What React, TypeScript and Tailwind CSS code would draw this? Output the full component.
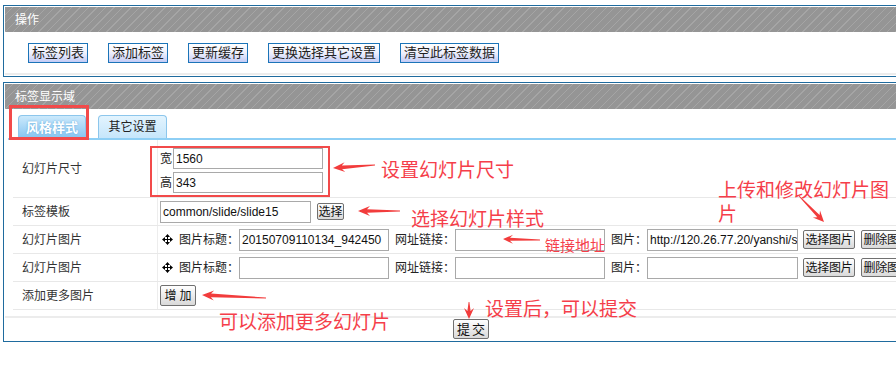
import React from "react";

const stripe =
  "bg-[repeating-linear-gradient(135deg,#959595_0px,#959595_5px,#a5a5a5_5px,#a5a5a5_6px)]";

function Header({ text }: { text: string }) {
  return (
    <div
      className={`h-[25px] ${stripe} pl-[10px] flex items-center text-white text-[12px] leading-none`}
    >
      {text}
    </div>
  );
}

function BlueBtn({ children }: { children: React.ReactNode }) {
  return (
    <div className="h-[20px] px-[3px] border border-[#1b74b8] bg-linear-to-b from-white via-[#eef0fc] to-[#c3cbf5] text-[13px] leading-[18px] text-[#222] whitespace-nowrap">
      {children}
    </div>
  );
}

function GrayBtn({
  children,
  className = "",
}: {
  children: React.ReactNode;
  className?: string;
}) {
  return (
    <div
      className={`border border-[#707070] rounded-[2px] bg-linear-to-b from-white to-[#d9d9d9] text-[12px] text-[#111] whitespace-nowrap flex items-center justify-center overflow-hidden ${className}`}
    >
      {children}
    </div>
  );
}

function Input({ value = "", className = "" }: { value?: string; className?: string }) {
  return (
    <div
      className={`border border-[#a9a9a9] bg-white text-[12px] text-[#111] pl-[2px] flex items-center overflow-hidden whitespace-nowrap ${className}`}
    >
      {value}
    </div>
  );
}

function MoveIcon() {
  return (
    <svg width="11" height="11" viewBox="0 0 11 11" className="shrink-0">
      <path d="M5 2h1v7H5z M2 5h7v1H2z" fill="#000" />
      <path
        d="M5.5 0 L8 3 H3z M5.5 11 L3 8 H8z M0 5.5 L3 3 V8z M11 5.5 L8 3 V8z"
        fill="#000"
      />
    </svg>
  );
}

function Arrow({
  x1,
  y1,
  x2,
  y2,
  hl = 12,
  hh = 5,
  w = 1.8,
}: {
  x1: number;
  y1: number;
  x2: number;
  y2: number;
  hl?: number;
  hh?: number;
  w?: number;
}) {
  const dx = x2 - x1;
  const dy = y2 - y1;
  const L = Math.hypot(dx, dy);
  const ux = dx / L;
  const uy = dy / L;
  const nx = -uy;
  const ny = ux;
  const bx = x2 - ux * hl;
  const by = y2 - uy * hl;
  const nbx = x2 - ux * (hl - 3);
  const nby = y2 - uy * (hl - 3);
  const t = 0.4;
  const pts = [
    [x1 + nx * t, y1 + ny * t],
    [nbx + nx * w, nby + ny * w],
    [bx + nx * hh, by + ny * hh],
    [x2, y2],
    [bx - nx * hh, by - ny * hh],
    [nbx - nx * w, nby - ny * w],
    [x1 - nx * t, y1 - ny * t],
  ]
    .map((p) => `${p[0].toFixed(1)},${p[1].toFixed(1)}`)
    .join(" ");
  return <polygon points={pts} fill="#f23c3c" />;
}

function Row({
  label,
  h,
  children,
  top = false,
}: {
  label: string;
  h: string;
  children: React.ReactNode;
  top?: boolean;
}) {
  return (
    <div className={`flex ${h} border-b border-[#e8e8e8]`}>
      <div className="w-[145px] shrink-0 border-r border-[#ededed] pl-[9px] flex items-center text-[12px] text-[#333]">
        {label}
      </div>
      <div className={`flex-1 flex ${top ? "items-start" : "items-center"} pl-[2px]`}>
        {children}
      </div>
    </div>
  );
}

function ImageRow({ title }: { title: string }) {
  return (
    <Row label="幻灯片图片" h="h-[28px]">
      <div className="flex items-center text-[12px] text-[#222] pl-[2px]">
        <MoveIcon />
        <span className="ml-[6px] w-[60px] whitespace-nowrap">图片标题：</span>
        <Input value={title} className="w-[150px] h-[22px]" />
        <span className="ml-[6px] w-[60px] whitespace-nowrap">网址链接：</span>
        <Input className="w-[150px] h-[22px]" />
        <span className="ml-[6px] w-[36px] whitespace-nowrap">图片：</span>
        <Input
          value={title ? "http://120.26.77.20/yanshi/static/" : ""}
          className="w-[151px] h-[22px]"
        />
        <GrayBtn className="ml-[5px] w-[52px] h-[19px] leading-none tracking-[-0.3px]">
          选择图片
        </GrayBtn>
        <GrayBtn className="ml-[6px] w-[52px] h-[19px] leading-none tracking-[-0.3px]">
          删除图片
        </GrayBtn>
      </div>
    </Row>
  );
}

export default function App() {
  return (
    <div className="relative w-[896px] h-[392px] overflow-hidden bg-white font-['Liberation_Sans','Noto_Sans_CJK_SC',sans-serif] text-[#222]">
      <div className="pt-[5px] pl-[3px]">
        {/* Panel 1 */}
        <div className="w-[1000px] border border-[#1f6b9e] p-px">
          <Header text="操作" />
          <div className="h-[43px] border-b-2 border-[#ececec] flex items-start gap-[20px] pl-[23px] pt-[11px]">
            <BlueBtn>标签列表</BlueBtn>
            <BlueBtn>添加标签</BlueBtn>
            <BlueBtn>更新缓存</BlueBtn>
            <BlueBtn>更换选择其它设置</BlueBtn>
            <BlueBtn>清空此标签数据</BlueBtn>
          </div>
        </div>

        {/* Panel 2 */}
        <div className="mt-[5px] w-[1000px] border border-[#1f6b9e] p-px">
          <Header text="标签显示域" />
          {/* Tabs */}
          <div className="h-[31px] ml-[3px] pt-[6px] border-b-2 border-[#8ecff5] flex items-end gap-[12px] pl-[10px]">
            <div className="w-[68px] h-[23px] rounded-t-[4px] border border-b-0 border-[#8cc6ec] bg-linear-to-b from-[#cbe9fc] to-[#86c5f0] flex items-center justify-center text-white font-bold text-[13px] leading-none [text-shadow:0_0_2px_#5fa7d8]">
              风格样式
            </div>
            <div className="w-[69px] h-[23px] rounded-t-[4px] border border-b-0 border-[#8cc6ec] bg-linear-to-b from-[#e3f4fe] to-[#c6e6fb] flex items-center justify-center text-[#222] text-[12px] leading-none">
              其它设置
            </div>
          </div>

          {/* Table */}
          <div className="ml-[8px]">
            <Row label="幻灯片尺寸" h="h-[58px]" top>
              <div className="flex flex-col gap-[3px] pt-[8px] text-[12px]">
                <div className="flex items-center">
                  <span className="w-[13px]">宽</span>
                  <Input value="1560" className="w-[150px] h-[21px]" />
                </div>
                <div className="flex items-center">
                  <span className="w-[13px]">高</span>
                  <Input value="343" className="w-[150px] h-[21px]" />
                </div>
              </div>
            </Row>
            <Row label="标签模板" h="h-[28px]">
              <Input value="common/slide/slide15" className="w-[151px] h-[22px]" />
              <GrayBtn className="ml-[6px] w-[27px] h-[17px] leading-none">选择</GrayBtn>
            </Row>
            <ImageRow title="20150709110134_942450" />
            <ImageRow title="" />
            <Row label="添加更多图片" h="h-[28px]">
              <GrayBtn className="w-[36px] h-[21px] leading-none tracking-[3px] pl-[3px]">
                增加
              </GrayBtn>
            </Row>
          </div>
          <div className="mt-[6px] border-t-2 border-[#ececec] pt-[1px] pb-[1px]">
            <GrayBtn className="ml-[448px] w-[36px] h-[20px] leading-none text-[13px] tracking-[2px] pl-[2px]">
              提交
            </GrayBtn>
          </div>
        </div>
      </div>

      {/* Annotations overlay */}
      <div className="absolute left-[9px] top-[105px] w-[80px] h-[35px] border-[3px] border-[#f24a4a] pointer-events-none" />
      <div className="absolute left-[150px] top-[146px] w-[180px] h-[51px] border-2 border-[#f24a4a] pointer-events-none" />

      <svg
        className="absolute left-0 top-0 pointer-events-none"
        width="896"
        height="392"
        viewBox="0 0 896 392"
      >
        <Arrow x1={375} y1={165} x2={333} y2={168} />
        <Arrow x1={400} y1={211} x2={358} y2={211} />
        <Arrow x1={540} y1={240} x2={503} y2={239} hl={10} hh={4.5} w={1.5} />
        <Arrow x1={799} y1={196} x2={824} y2={222} hl={11} hh={5} w={1.6} />
        <Arrow x1={266} y1={298} x2={202} y2={295} />
        <Arrow x1={469} y1={302} x2={469} y2={319} hl={11} hh={5} w={1.6} />
      </svg>

      <div className="absolute left-[381px] top-[157px] text-[19px] leading-[24px] text-[#f53e4a] font-['Noto_Sans_CJK_SC',sans-serif] whitespace-nowrap">
        设置幻灯片尺寸
      </div>
      <div className="absolute left-[411px] top-[206px] text-[19px] leading-[24px] text-[#f53e4a] font-['Noto_Sans_CJK_SC',sans-serif] whitespace-nowrap">
        选择幻灯片样式
      </div>
      <div className="absolute left-[545px] top-[235px] text-[15px] leading-[20px] text-[#f53e4a] font-['Noto_Sans_CJK_SC',sans-serif] whitespace-nowrap">
        链接地址
      </div>
      <div className="absolute left-[718px] top-[177px] text-[19px] leading-[24px] text-[#f53e4a] font-['Noto_Sans_CJK_SC',sans-serif] whitespace-nowrap">
        上传和修改幻灯片图
        <br />片
      </div>
      <div className="absolute left-[219px] top-[309px] text-[19px] leading-[24px] text-[#f53e4a] font-['Noto_Sans_CJK_SC',sans-serif] whitespace-nowrap">
        可以添加更多幻灯片
      </div>
      <div className="absolute left-[485px] top-[296px] text-[19px] leading-[24px] text-[#f53e4a] font-['Noto_Sans_CJK_SC',sans-serif] whitespace-nowrap">
        设置后，可以提交
      </div>
    </div>
  );
}
